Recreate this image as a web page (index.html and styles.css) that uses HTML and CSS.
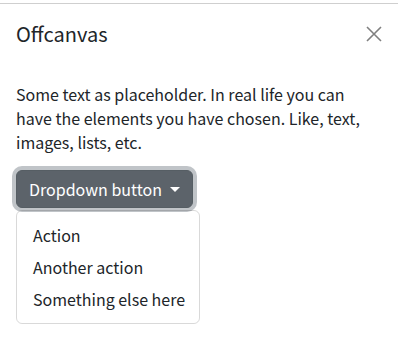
FILE: index.html
```html
<!DOCTYPE html>
<html lang="en">
<head>
	<meta charset="utf-8">
	<meta name="viewport" content="width=device-width, initial-scale=1.0">
	<link rel="stylesheet" href="styles.css">
</head>
<body>
	<div class="offcanvas">
		<div class="offcanvas-header">
			<h5 class="offcanvas-title">Offcanvas</h5>
			<button class="btn-close" aria-label="Close">
				<svg width="16" height="16" viewBox="0 0 16 16">
					<path d="M1 1L15 15M15 1L1 15" stroke="#808080" stroke-width="1.6" fill="none"/>
				</svg>
			</button>
		</div>
		<div class="offcanvas-body">
			<p class="intro">Some text as placeholder. In real life you can have the elements you have chosen. Like, text, images, lists, etc.</p>
			<div class="dropdown">
				<button class="btn-dropdown">Dropdown button <span class="caret"></span></button>
				<ul class="dropdown-menu">
					<li><a href="#">Action</a></li>
					<li><a href="#">Another action</a></li>
					<li><a href="#">Something else here</a></li>
				</ul>
			</div>
		</div>
	</div>
</body>
</html>
```

FILE: styles.css
```css
body {
	margin: 0;
	font-family: "Noto Sans CJK KR", "Noto Sans", sans-serif;
	font-size: 16px;
	line-height: 1.5;
	color: #212529;
	background: white;
}
.offcanvas {
	border-top: 1px solid #cfcfcf;
	margin-top: 3px;
}
.offcanvas-header {
	display: flex;
	align-items: center;
	justify-content: space-between;
	padding: 18px 16px 20px;
}
.offcanvas-title {
	margin: 0;
	font-size: 20px;
	font-weight: normal;
	line-height: 1.2;
}
.btn-close {
	display: flex;
	border: 0;
	background: none;
	padding: 4px;
	margin-right: -4px;
	cursor: pointer;
}
.offcanvas-body {
	padding: 16px;
}
.intro {
	margin: 0 0 16px;
}
.dropdown {
	display: inline-block;
}
.btn-dropdown {
	display: flex;
	align-items: center;
	font: inherit;
	color: white;
	background: #5c636a;
	border: 1px solid #565e64;
	border-radius: 6px;
	padding: 6px 12px;
	box-shadow: 0 0 0 4px rgba(130, 138, 145, 0.5);
	cursor: pointer;
}
.caret {
	display: inline-block;
	margin-left: 8px;
	border-top: 5px solid white;
	border-left: 5px solid transparent;
	border-right: 5px solid transparent;
}
.dropdown-menu {
	list-style: none;
	margin: 2px 0 0;
	padding: 8px 0;
	border: 1px solid rgba(0, 0, 0, 0.15);
	border-radius: 6px;
}
.dropdown-menu a {
	display: block;
	padding: 4px 14px 4px 16px;
	color: #212529;
	text-decoration: none;
	white-space: nowrap;
}
```
